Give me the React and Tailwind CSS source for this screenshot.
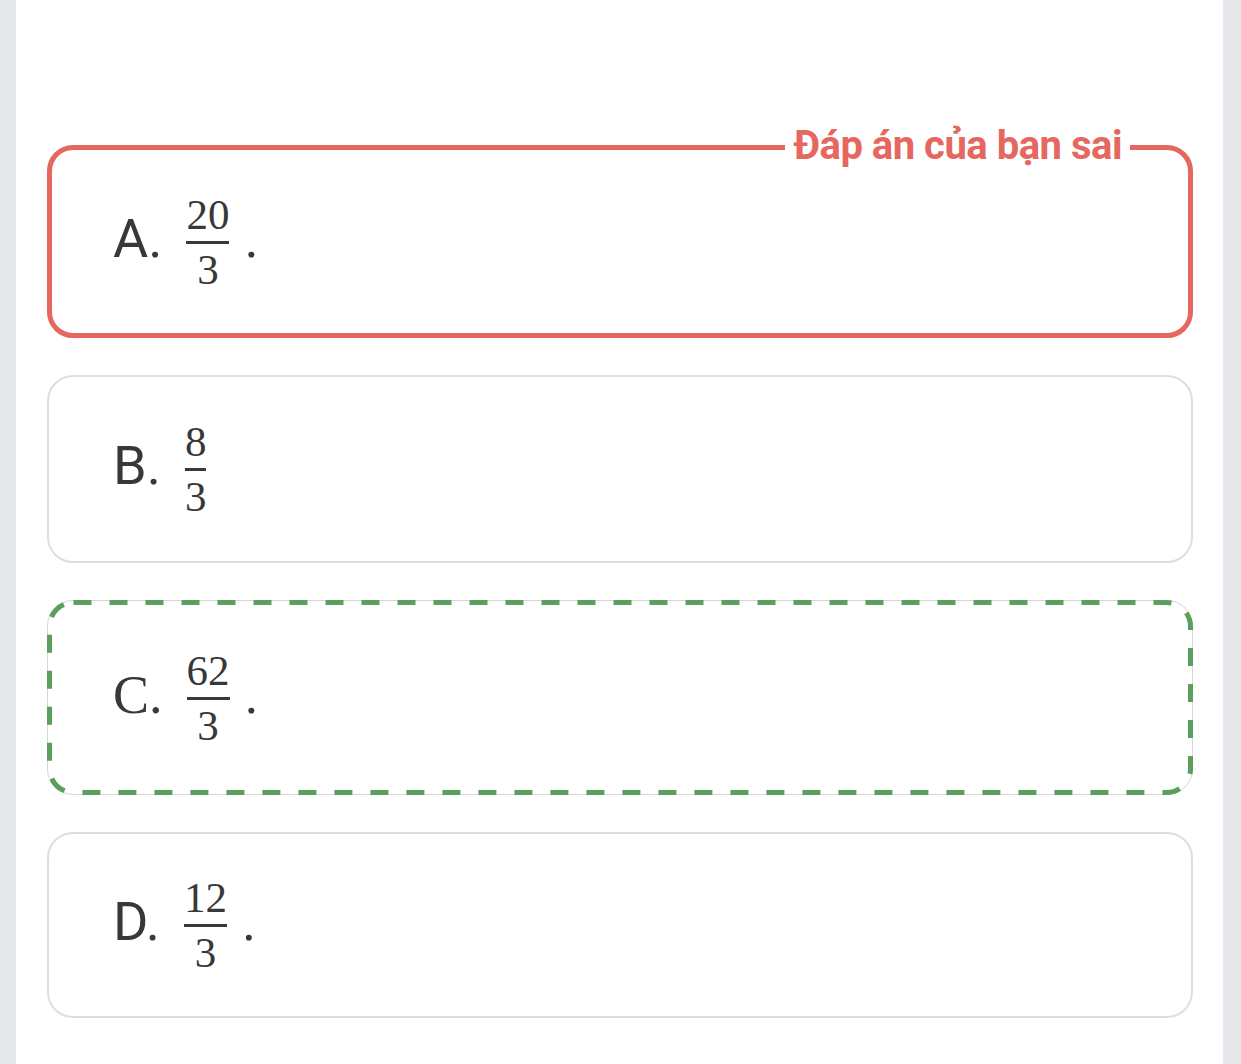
import React from "react";

const sans = { fontFamily: "Roboto, 'Liberation Sans', sans-serif" };

function Frac({ num, den }) {
  return (
    <span className="inline-flex flex-col items-center px-[9px] ml-[15px] font-['Liberation_Serif',serif] text-[43px] leading-none text-[#383838]">
      <span className="block">{num}</span>
      <span className="block w-full h-[3px] bg-[#383838] mt-[5px] mb-[4px]"></span>
      <span className="block">{den}</span>
    </span>
  );
}

function Option({ label, num, den, dot, serifLabel }) {
  return (
    <div className="flex items-center">
      <span
        className={
          "text-[54px] leading-none text-[#383838] mb-[6px] " +
          (serifLabel ? "font-['Liberation_Serif',serif]" : "font-['Roboto',sans-serif]")
        }
      >
        {label}
      </span>
      <Frac num={num} den={den} />
      {dot && (
        <span className="text-[54px] leading-none text-[#383838] mb-[6px] ml-[6px] font-['Roboto',sans-serif]">
          .
        </span>
      )}
    </div>
  );
}

export default function App() {
  return (
    <div className="w-full h-[1064px] bg-[#e6e7eb] pl-[16px] pr-[18px] overflow-hidden" style={sans}>
      <div className="h-full bg-white pl-[31px] pr-[30px] pt-[145px] flex flex-col gap-[37px]">
        <div className="relative h-[193px] border-[5px] border-[#e5675f] rounded-[26px] flex items-center pl-[61px]">
          <span className="absolute right-[58px] top-[-24px] bg-white px-[8px] font-['Roboto',sans-serif] font-bold text-[40px] leading-none text-[#e5675f] tracking-[-0.5px]">
            Đáp án của bạn sai
          </span>
          <Option label="A." num="20" den="3" dot />
        </div>
        <div className="h-[188px] border-2 border-[#dedede] rounded-[26px] flex items-center pl-[64px]">
          <Option label="B." num="8" den="3" />
        </div>
        <div className="relative h-[195px] border border-[#d8d8d8] rounded-[26px] flex items-center pl-[65px]">
          <svg
            className="absolute left-[-1px] top-[-1px] pointer-events-none"
            width="1146"
            height="195"
            viewBox="0 0 1146 195"
            fill="none"
          >
            <rect
              x="2.5"
              y="2.5"
              width="1141"
              height="190"
              rx="24"
              stroke="#5b9f5c"
              strokeWidth="5"
              strokeDasharray="18 18"
            />
          </svg>
          <Option label="C." num="62" den="3" dot serifLabel />
        </div>
        <div className="h-[186px] border-2 border-[#dedede] rounded-[26px] flex items-center pl-[64px]">
          <Option label="D." num="12" den="3" dot />
        </div>
      </div>
    </div>
  );
}
